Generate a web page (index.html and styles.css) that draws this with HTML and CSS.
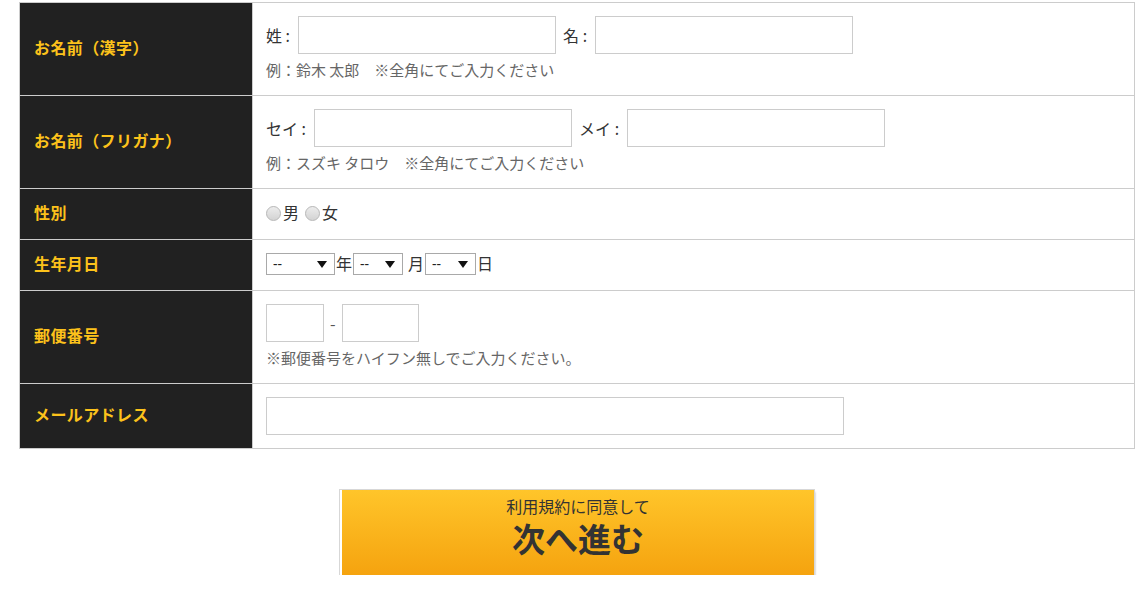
FILE: index.html
```html
<!DOCTYPE html>
<html lang="ja">
<head>
<meta charset="utf-8">
<link rel="stylesheet" href="styles.css">
</head>
<body>
<div class="page">
  <table class="form">
    <tr class="r-tall">
      <th>お名前（漢字）</th>
      <td>
        <div class="line">
          <span class="lbl">姓 :</span><input class="txt name" type="text">
          <span class="lbl lbl2">名 :</span><input class="txt name" type="text">
        </div>
        <p class="note">例：鈴木 太郎　※全角にてご入力ください</p>
      </td>
    </tr>
    <tr class="r-tall">
      <th>お名前（フリガナ）</th>
      <td>
        <div class="line">
          <span class="lbl">セイ :</span><input class="txt name kana" type="text">
          <span class="lbl lbl2">メイ :</span><input class="txt name kana" type="text">
        </div>
        <p class="note">例：スズキ タロウ　※全角にてご入力ください</p>
      </td>
    </tr>
    <tr>
      <th>性別</th>
      <td class="short">
        <div class="line">
          <label class="radio"><input type="radio" name="sex"><span>男</span></label>
          <label class="radio"><input type="radio" name="sex"><span>女</span></label>
        </div>
      </td>
    </tr>
    <tr>
      <th>生年月日</th>
      <td class="short">
        <div class="line">
          <span class="sel sel-y"><select><option>--</option></select></span><span class="unit">年</span><span class="sel sel-m"><select><option>--</option></select></span><span class="unit unit-sp">月</span><span class="sel sel-d"><select><option>--</option></select></span><span class="unit">日</span>
        </div>
      </td>
    </tr>
    <tr class="r-tall">
      <th>郵便番号</th>
      <td>
        <div class="line">
          <input class="txt zip1" type="text"><span class="dash">-</span><input class="txt zip2" type="text">
        </div>
        <p class="note">※郵便番号をハイフン無しでご入力ください。</p>
      </td>
    </tr>
    <tr>
      <th>メールアドレス</th>
      <td>
        <div class="line">
          <input class="txt mail" type="text">
        </div>
      </td>
    </tr>
  </table>
  <div class="submit-wrap">
    <button class="submit" type="button">
      <span class="sub1">利用規約に同意して</span>
      <span class="sub2">次へ進む</span>
    </button>
  </div>
</div>
</body>
</html>
```
FILE: styles.css
```css
* { box-sizing: border-box; }
html, body { margin: 0; padding: 0; background: #fff; }
body {
  font-family: "Noto Sans CJK JP", "Noto Sans", "Liberation Sans", sans-serif;
  color: #333;
  font-size: 16px;
}
.page { padding: 2px 6px 0 19px; }
.form {
  width: 100%;
  border-collapse: collapse;
  border: 1px solid #ccc;
}
.form th, .form td {
  border: 1px solid #ccc;
  vertical-align: middle;
}
.form th {
  width: 233px;
  background: #212121;
  color: #fcc21b;
  font-weight: bold;
  font-size: 16px;
  letter-spacing: 0.4px;
  text-align: left;
  padding: 0 14px 5px 14px;
  line-height: 20px;
}
.form td {
  padding: 13px 13px 13px 13px;
}
.form td.short {
  padding: 11px 13px 15px 13px;
}
.line {
  display: flex;
  align-items: center;
  min-height: 24px;
  line-height: 24px;
}
.lbl { margin-right: 8px; white-space: nowrap; }
.lbl2 { margin-left: 7px; }
.txt {
  border: 1px solid #ccc;
  height: 38px;
  background: #fff;
  font: inherit;
  padding: 0 6px;
  margin: 0;
  outline: none;
}
.name { width: 258px; }
.zip1 { width: 58px; }
.zip2 { width: 77px; }
.dash { margin: 0 6px 0 6px; color: #555; }
.mail { width: 578px; }
.note {
  margin: 4px 0 0 0;
  font-size: 15px;
  color: #666;
  line-height: 24px;
}
.radio { display: inline-flex; align-items: center; margin-right: 6px; }
.radio input {
  appearance: none;
  -webkit-appearance: none;
  width: 15px;
  height: 15px;
  margin: 2px 2px 0 0;
  border-radius: 50%;
  border: 1px solid #b9b9b9;
  background: linear-gradient(#ececec, #d3d3d3);
}
.sel { position: relative; display: inline-block; height: 22px; margin-top: 1px; }
.sel select {
  appearance: none;
  -webkit-appearance: none;
  height: 22px;
  border: 1px solid #a9a9a9;
  background: #fff;
  font-family: "Noto Sans", "Liberation Sans", sans-serif;
  font-size: 14px;
  color: #222;
  padding: 0 0 0 6px;
  margin: 0;
  border-radius: 0;
  display: block;
}
.sel::after {
  content: "";
  position: absolute;
  right: 8px;
  top: 8px;
  border-left: 5px solid transparent;
  border-right: 5px solid transparent;
  border-top: 7px solid #111;
  pointer-events: none;
}
.sel-y select { width: 69px; }
.sel-m select { width: 50px; }
.sel-d select { width: 51px; }
.unit { margin: 0 1px 0 1px; }
.unit-sp { margin-left: 5px; }
.submit-wrap {
  display: flex;
  justify-content: center;
  padding: 41px 0 0 0;
}
.submit {
  width: 474px;
  height: 85px;
  border: none;
  border-left: 2px solid #fff;
  outline: 1px solid #d7d7d7;
  background: linear-gradient(#ffc52a, #f5a30f);
  box-shadow: 1px 2px 2px rgba(0,0,0,0.35);
  font-family: inherit;
  color: #333;
  display: flex;
  flex-direction: column;
  align-items: center;
  justify-content: center;
  padding: 0 0 12px 0;
  cursor: pointer;
}
.sub1 { font-size: 16px; line-height: 18px; }
.sub2 { font-size: 33px; font-weight: bold; line-height: 36px; margin-top: 5px; }
```
